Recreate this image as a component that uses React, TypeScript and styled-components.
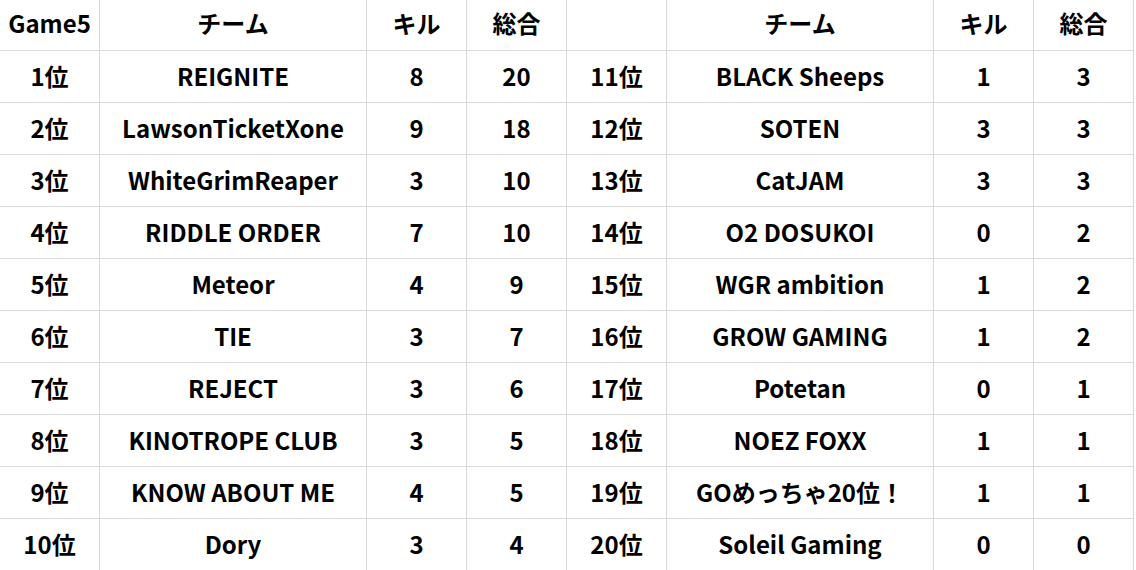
import React from "react";
import styled, { createGlobalStyle } from "styled-components";

const Global = createGlobalStyle`
  html, body { margin: 0; padding: 0; background: #ffffff; }
  body { font-family: "Noto Sans CJK JP", "Noto Sans", sans-serif; }
`;

const Sheet = styled.div`
  display: grid;
  grid-template-columns: 100px 267px 100px 100px 100px 267px 100px 100px;
  grid-auto-rows: 52px;
  grid-template-rows: 51px;
  width: 1134px;
  background: #ffffff;
`;

const Cell = styled.div<{ $head?: boolean }>`
  display: flex;
  align-items: center;
  justify-content: center;
  box-sizing: border-box;
  border-right: 1px solid #dadada;
  border-bottom: 1px solid #dadada;
  font-family: "Noto Sans CJK JP", "Noto Sans", sans-serif;
  font-weight: 700;
  font-size: 24px;
  line-height: 1;
  color: #000000;
  white-space: nowrap;
  padding-bottom: ${(p) => (p.$head ? "4px" : "2px")};
`;

const left: [string, string, number, number][] = [
  ["1位", "REIGNITE", 8, 20],
  ["2位", "LawsonTicketXone", 9, 18],
  ["3位", "WhiteGrimReaper", 3, 10],
  ["4位", "RIDDLE ORDER", 7, 10],
  ["5位", "Meteor", 4, 9],
  ["6位", "TIE", 3, 7],
  ["7位", "REJECT", 3, 6],
  ["8位", "KINOTROPE CLUB", 3, 5],
  ["9位", "KNOW ABOUT ME", 4, 5],
  ["10位", "Dory", 3, 4],
];

const right: [string, string, number, number][] = [
  ["11位", "BLACK Sheeps", 1, 3],
  ["12位", "SOTEN", 3, 3],
  ["13位", "CatJAM", 3, 3],
  ["14位", "O2 DOSUKOI", 0, 2],
  ["15位", "WGR ambition", 1, 2],
  ["16位", "GROW GAMING", 1, 2],
  ["17位", "Potetan", 0, 1],
  ["18位", "NOEZ FOXX", 1, 1],
  ["19位", "GOめっちゃ20位！", 1, 1],
  ["20位", "Soleil Gaming", 0, 0],
];

export default function App() {
  const heads = ["Game5", "チーム", "キル", "総合", "", "チーム", "キル", "総合"];
  return (
    <>
      <Global />
      <Sheet>
        {heads.map((h, i) => (
          <Cell $head key={"h" + i}>
            {h}
          </Cell>
        ))}
        {left.map((l, i) => {
          const r = right[i];
          return (
            <React.Fragment key={i}>
              <Cell>{l[0]}</Cell>
              <Cell>{l[1]}</Cell>
              <Cell>{l[2]}</Cell>
              <Cell>{l[3]}</Cell>
              <Cell>{r[0]}</Cell>
              <Cell>{r[1]}</Cell>
              <Cell>{r[2]}</Cell>
              <Cell>{r[3]}</Cell>
            </React.Fragment>
          );
        })}
      </Sheet>
    </>
  );
}
